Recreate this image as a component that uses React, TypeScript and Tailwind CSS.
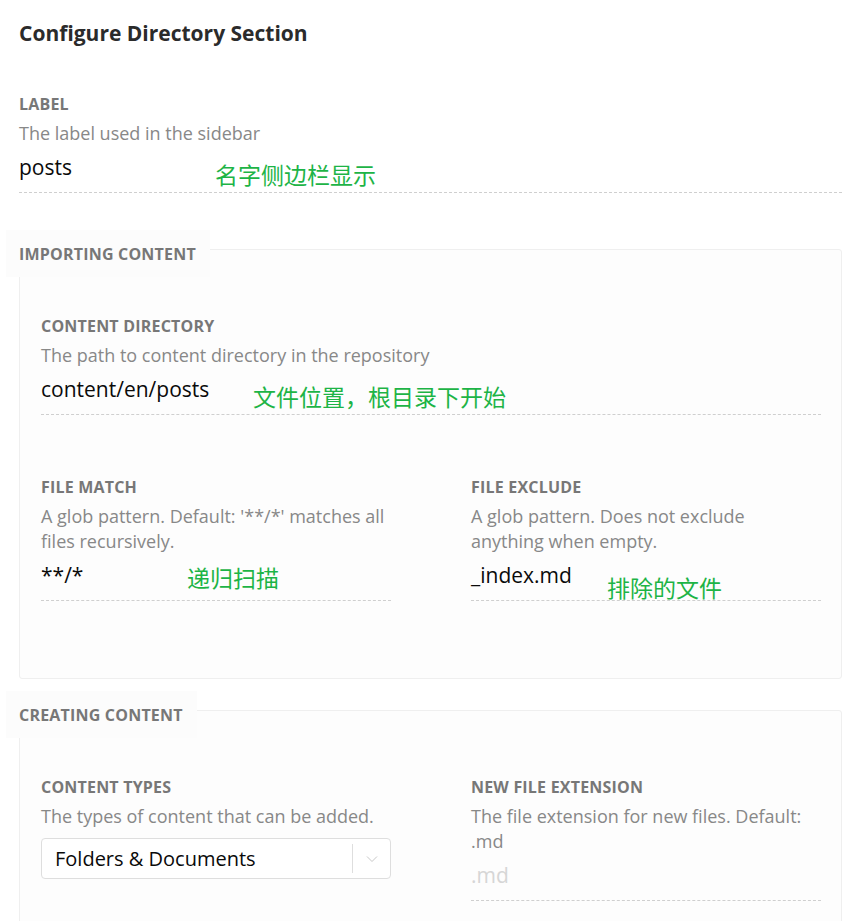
import type { ReactNode } from "react";

const font = { fontFamily: '"Open Sans", "Noto Sans CJK SC", sans-serif' };

function Note({ children, className }: { children: ReactNode; className: string }) {
  // green notes written over the screenshot
  return (
    <span
      className={`absolute whitespace-nowrap text-[23px] leading-none text-[#1db446] ${className}`}
      style={{ fontFamily: '"Noto Sans CJK SC", sans-serif' }}
    >
      {children}
    </span>
  );
}

function Label({ children }: { children: ReactNode }) {
  return <div className="text-[16px] font-bold leading-[20px] tracking-[0.2px] text-[#777]">{children}</div>;
}

function Hint({ children }: { children: ReactNode }) {
  return <div className="mt-[7px] text-[18px] leading-[25px] text-[#888]">{children}</div>;
}

function Field({
  label,
  hint,
  value,
  placeholder,
  note,
}: {
  label: string;
  hint: ReactNode;
  value: string;
  placeholder?: boolean;
  note?: ReactNode;
}) {
  return (
    <div>
      <Label>{label}</Label>
      <Hint>{hint}</Hint>
      <div className="relative mt-[7px] border-b border-dashed border-[#cfcfcf] pb-[11px]">
        <div className={`text-[21px] leading-[28px] ${placeholder ? "text-[#d6d6d6]" : "text-[#0a0a0a]"}`}>
          {value}
        </div>
        {note}
      </div>
    </div>
  );
}

function Group({ title, children }: { title: string; children: ReactNode }) {
  return (
    <div className="relative rounded-[3px] border border-[#efefef] bg-[#fdfdfd] pt-[66px] pr-[20px] pl-[21px] pb-[77px]">
      <div className="absolute -top-[20px] -left-[14px] h-[47px] bg-[#fcfcfc] pt-[14px] pr-[14px] pl-[13px] text-[16px] font-bold leading-[20px] tracking-[0.2px] text-[#777]">
        {title}
      </div>
      {children}
    </div>
  );
}

export default function App() {
  return (
    <div className="min-h-[921px] bg-white pt-[19px] pr-[4px] pl-[19px]" style={font}>
      <h1 className="text-[21px] font-bold leading-[28px] text-[#2b2b2b]">Configure Directory Section</h1>

      <div className="mt-[47px]">
        <Field
          label="LABEL"
          hint="The label used in the sidebar"
          value="posts"
          note={<Note className="top-[10px] left-[196px]">名字侧边栏显示</Note>}
        />
      </div>

      <div className="mt-[56px]">
        <Group title="IMPORTING CONTENT">
          <Field
            label="CONTENT DIRECTORY"
            hint="The path to content directory in the repository"
            value="content/en/posts"
            note={<Note className="top-[10px] left-[212px]">文件位置，根目录下开始</Note>}
          />
          <div className="mt-[62px] grid grid-cols-[350px_350px] gap-x-[80px]">
            <Field
              label="FILE MATCH"
              hint="A glob pattern. Default: '**/*' matches all files recursively."
              value="**/*"
              note={<Note className="top-[5px] left-[146px]">递归扫描</Note>}
            />
            <Field
              label="FILE EXCLUDE"
              hint="A glob pattern. Does not exclude anything when empty."
              value="_index.md"
              note={<Note className="top-[15px] left-[136px]">排除的文件</Note>}
            />
          </div>
        </Group>
      </div>

      <div className="mt-[31px]">
        <Group title="CREATING CONTENT">
          <div className="grid grid-cols-[350px_350px] gap-x-[80px]">
            <div>
              <Label>CONTENT TYPES</Label>
              <Hint>The types of content that can be added.</Hint>
              <div className="mt-[9px] flex h-[41px] items-center rounded-[4px] border border-[#dedede] bg-white">
                <div className="flex-1 pl-[13px] text-[20px] leading-[28px] text-[#0a0a0a]">Folders &amp; Documents</div>
                <div className="h-[29px] w-px bg-[#dedede]" />
                <div className="flex w-[37px] items-center justify-center">
                  <svg width="12" height="8" viewBox="0 0 12 8" fill="none" stroke="#c8c8c8" strokeWidth="1">
                    <path d="M1 1.5l5 5 5-5" />
                  </svg>
                </div>
              </div>
            </div>
            <Field
              label="NEW FILE EXTENSION"
              hint="The file extension for new files. Default: .md"
              value=".md"
              placeholder
            />
          </div>
        </Group>
      </div>
    </div>
  );
}
